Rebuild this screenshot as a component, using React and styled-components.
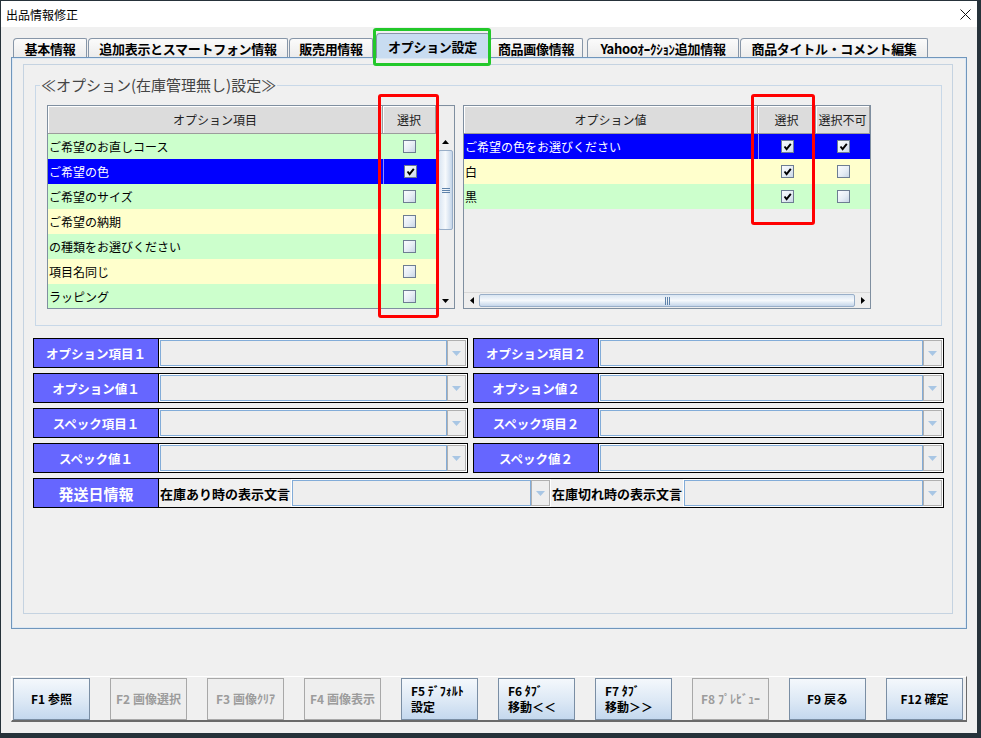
import React from 'react'
import styled, { createGlobalStyle } from 'styled-components'

const GlobalStyle = createGlobalStyle`
    html, body {
        margin: 0;
        padding: 0;
        background: #26323a;
    }
    body {
        font-family: "Noto Sans CJK JP", "Noto Sans", sans-serif;
        font-size: 12px;
        color: #000;
    }
    * {
        box-sizing: border-box;
    }
`;

const Window = styled.div`
    position: relative;
    margin: 1px 0 0 1px;
    width: 976px;
    height: 732px;
    background: #f0f0f0;
    display: flex;
    flex-direction: column;
    overflow: hidden;
`;

const TitleBar = styled.div`
    height: 26px;
    flex-shrink: 0;
    background: #fff;
    display: flex;
    align-items: center;
    justify-content: space-between;
    padding: 0 6px 0 5px;
    font-size: 12px;
`;

const Body = styled.div`
    padding: 6px 10px 0 10px;
    display: flex;
    flex-direction: column;
`;

const TabStrip = styled.div`
    height: 24px;
    display: flex;
    align-items: flex-end;
    padding-left: 2px;
`;

const Tab = styled.div`
    position: relative;
    z-index: ${({ active }) => active ? 2 : 1};
    width: ${({ w }) => w}px;
    margin-left: ${({ ml }) => ml}px;
    height: ${({ active }) => active ? 25 : 19}px;
    margin-bottom: ${({ active }) => active ? -1 : 0}px;
    border: 1px solid #8796a8;
    border-bottom: none;
    border-radius: 4px 2px 0 0;
    background: ${({ active }) => active ? '#c8dcf1' : 'linear-gradient(#fbfbfb, #ececec)'};
    display: flex;
    align-items: center;
    justify-content: center;
    font-size: 13px;
    font-weight: 700;
    white-space: nowrap;
    letter-spacing: -0.3px;
`;

const TabPanel = styled.div`
    height: 572px;
    border: 1px solid #7096bc;
    box-shadow: inset 0 0 0 1px #dce8f4;
    padding: 6px 13px 14px 11px;
    display: flex;
    flex-direction: column;
`;

const InnerBox = styled.div`
    flex: 1;
    border: 1px solid #c5d3e1;
    padding: 11px 8px 0 9px;
`;

const GroupBox = styled.fieldset`
    margin: 0 2px;
    border: 1px solid #c8d8e8;
    padding: 11px 11px 16px 11px;
    display: flex;
    gap: 8px;
`;

const GroupTitle = styled.legend`
    margin-left: -7px;
    padding: 0 1px;
    font-size: 15px;
    line-height: 18px;
    color: #444;
`;

const TableFrame = styled.div`
    width: 408px;
    height: 204px;
    border: 1px solid #7f8fa0;
    background: #eeeeee;
    display: flex;
    flex-direction: column;
    overflow: hidden;
`;

const HeaderRow = styled.div`
    height: 28px;
    flex-shrink: 0;
    display: flex;
`;

const HeaderCell = styled.div`
    ${({ w }) => w ? `width: ${w}px; flex-shrink: 0;` : 'flex: 1;'}
    background: #dcdcdc;
    border-right: 1px solid #9c9c9c;
    border-bottom: 1px solid #9c9c9c;
    box-shadow: inset 1px 1px 0 #fff;
    display: flex;
    align-items: center;
    justify-content: center;
    font-size: 12px;
    color: #222;
    white-space: nowrap;
`;

const Corner = styled.div`
    width: 18px;
    flex-shrink: 0;
    background: #eeeeee;
`;

const BodyArea = styled.div`
    flex: 1;
    display: flex;
    min-height: 0;
`;

const Rows = styled.div`
    flex: 1;
    display: flex;
    flex-direction: column;
    overflow: hidden;
`;

const Row = styled.div`
    height: 25px;
    flex-shrink: 0;
    display: flex;
    background: ${({ selected, odd }) => selected ? '#0000ff' : odd ? '#ffffcc' : '#ccffcc'};
    color: ${({ selected }) => selected ? '#fff' : '#000'};
`;

const Cell = styled.div`
    ${({ w }) => w ? `width: ${w}px; flex-shrink: 0;` : 'flex: 1;'}
    display: flex;
    align-items: center;
    justify-content: ${({ center }) => center ? 'center' : 'flex-start'};
    padding-left: ${({ center }) => center ? 0 : 1}px;
    font-size: 12px;
    white-space: nowrap;
    overflow: hidden;
    border-left: ${({ divider }) => divider ? '1px solid rgba(255,255,255,0.55)' : 'none'};
`;

const Box = styled.span`
    width: 13px;
    height: 13px;
    border: 1px solid #6d7d92;
    background: linear-gradient(135deg, #fafcfe 0%, #e6edf5 55%, #c9d6e6 100%);
    display: flex;
    align-items: center;
    justify-content: center;
`;

const VScroll = styled.div`
    width: 18px;
    flex-shrink: 0;
    background: #eeeeee;
    border-left: 1px solid #d8d8d8;
    display: flex;
    flex-direction: column;
`;

const HScroll = styled.div`
    height: 16px;
    flex-shrink: 0;
    background: #eeeeee;
    border-top: 1px solid #d8d8d8;
    display: flex;
`;

const ArrowBtn = styled.div`
    ${({ vertical }) => vertical ? 'height: 15px;' : 'width: 15px;'}
    flex-shrink: 0;
    display: flex;
    align-items: center;
    justify-content: center;
`;

const Thumb = styled.div`
    ${({ vertical }) => vertical
        ? 'height: 80px; margin: 1px 1px 0 1px; background: linear-gradient(to right, #d9e5f2, #f6f9fc 50%, #c5d6ea);'
        : 'flex: 1; margin: 1px 0 1px 0; background: linear-gradient(#d9e5f2, #f6f9fc 50%, #c5d6ea);'}
    border: 1px solid #98aec8;
    border-radius: 2px;
    display: flex;
    align-items: center;
    justify-content: center;
`;

const Track = styled.div`
    flex: 1;
`;

const Form = styled.div`
    margin-top: 12px;
    display: grid;
    grid-template-columns: 435px 1fr;
    grid-auto-rows: 30px;
    gap: 5px;
`;

const FieldBox = styled.div`
    grid-column: ${({ wide }) => wide ? '1 / -1' : 'auto'};
    border: 1px solid #000;
    background: #fff;
    display: flex;
`;

const Label = styled.div`
    width: 125px;
    flex-shrink: 0;
    background: #6666ff;
    border-right: 1px solid #000;
    color: #fff;
    font-weight: 700;
    font-size: ${({ big }) => big ? 15 : 12.5}px;
    display: flex;
    align-items: center;
    justify-content: center;
    white-space: nowrap;
`;

const ComboWrap = styled.div`
    flex: 1;
    padding: 1px;
    display: flex;
`;

const Caption = styled.div`
    flex-shrink: 0;
    background: #f0f0f0;
    padding: 0 1px;
    display: flex;
    align-items: center;
    font-size: 13px;
    font-weight: 700;
    white-space: nowrap;
`;

const ComboField = styled.div`
    flex: 1;
    display: flex;
    background: #f0f0f0;
`;

const ComboText = styled.div`
    flex: 1;
    background: #eeeeee;
    border: 1px solid #82acd8;
`;

const ComboArrow = styled.div`
    width: 19px;
    flex-shrink: 0;
    background: #eeeeee;
    border: 1px solid #b0b0b0;
    display: flex;
    align-items: center;
    justify-content: center;
`;

const ButtonBar = styled.div`
    margin-top: 47px;
    border-top: 1px solid #fff;
    border-left: 1px solid #fff;
    border-right: 1px solid #6a6a6a;
    border-bottom: 2px solid #6a6a6a;
    padding: 1px 1px 0 1px;
    display: flex;
    gap: 20px;
`;

const FButton = styled.div`
    width: 77px;
    height: 42px;
    flex-shrink: 0;
    border: 1px solid ${({ disabled }) => disabled ? '#a8a8a8' : '#7a8ea4'};
    background: ${({ disabled }) => disabled ? '#eeeeee' : 'linear-gradient(#f4f8fc, #dce8f5 55%, #c4d8ee)'};
    color: ${({ disabled }) => disabled ? '#9c9c9c' : '#000'};
    font-size: 12px;
    font-weight: 700;
    line-height: 16px;
    display: flex;
    flex-direction: column;
    justify-content: center;
    align-items: ${({ multi }) => multi ? 'flex-start' : 'center'};
    padding-left: ${({ multi }) => multi ? 9 : 0}px;
    white-space: nowrap;
`;

const Mark = styled.div`
    position: absolute;
    left: ${({ x }) => x}px;
    top: ${({ y }) => y}px;
    width: ${({ w }) => w}px;
    height: ${({ h }) => h}px;
    border: 3px solid ${({ color }) => color};
    border-radius: 3px;
    pointer-events: none;
    z-index: 10;
`;

const tabs = [
    { label: '基本情報', w: 74, ml: 0 },
    { label: '追加表示とスマートフォン情報', w: 200, ml: 1 },
    { label: '販売用情報', w: 84, ml: 1 },
    { label: 'オプション設定', w: 113, ml: 3, active: true },
    { label: '商品画像情報', w: 94, ml: 0 },
    { label: 'Yahooｵｰｸｼｮﾝ追加情報', w: 152, ml: 4 },
    { label: '商品タイトル・コメント編集', w: 188, ml: 1 },
];

const optionItems = [
    { name: 'ご希望のお直しコース', checked: false },
    { name: 'ご希望の色', checked: true, selected: true },
    { name: 'ご希望のサイズ', checked: false },
    { name: 'ご希望の納期', checked: false },
    { name: 'の種類をお選びください', checked: false },
    { name: '項目名同じ', checked: false },
    { name: 'ラッピング', checked: false },
];

const optionValues = [
    { name: 'ご希望の色をお選びください', checked: true, blocked: true, selected: true },
    { name: '白', checked: true, blocked: false },
    { name: '黒', checked: true, blocked: false },
];

const buttons = [
    { lines: ['F1 参照'] },
    { lines: ['F2 画像選択'], disabled: true },
    { lines: ['F3 画像ｸﾘｱ'], disabled: true },
    { lines: ['F4 画像表示'], disabled: true },
    { lines: ['F5 ﾃﾞﾌｫﾙﾄ', '設定'] },
    { lines: ['F6 ﾀﾌﾞ', '移動＜＜'] },
    { lines: ['F7 ﾀﾌﾞ', '移動＞＞'] },
    { lines: ['F8 ﾌﾟﾚﾋﾞｭｰ'], disabled: true },
    { lines: ['F9 戻る'] },
    { lines: ['F12 確定'] },
];

function CloseIcon() {
    return (
        <svg width="11" height="11" viewBox="0 0 11 11">
            <path d="M0.5 0.5 L10.5 10.5 M10.5 0.5 L0.5 10.5" stroke="#111" strokeWidth="1" />
        </svg>
    )
}

function CheckBox({ checked }) {
    return (
        <Box>
            {checked && (
                <svg width="9" height="9" viewBox="0 0 9 9">
                    <path d="M1.5 4.5 L3.6 7.2 L7.8 1.8" stroke="#000" strokeWidth="1.9" fill="none" />
                </svg>
            )}
        </Box>
    )
}

function Arrow({ dir, color = '#000', size = 7 }) {
    const h = size / 2 + 0.5;
    const paths = {
        up: `M0 ${h} L${size / 2} 0 L${size} ${h} Z`,
        down: `M0 0 L${size / 2} ${h} L${size} 0 Z`,
        left: `M${h} 0 L0 ${size / 2} L${h} ${size} Z`,
        right: `M0 0 L${h} ${size / 2} L0 ${size} Z`,
    };
    const vertical = dir === 'up' || dir === 'down';
    return (
        <svg width={vertical ? size : h} height={vertical ? h : size}>
            <path d={paths[dir]} fill={color} />
        </svg>
    )
}

function Grip({ vertical }) {
    return vertical ? (
        <svg width="8" height="7">
            <path d="M0 1.5 H8 M0 3.5 H8 M0 5.5 H8" stroke="#5e82aa" strokeWidth="1" />
        </svg>
    ) : (
        <svg width="7" height="8">
            <path d="M1.5 0 V8 M3.5 0 V8 M5.5 0 V8" stroke="#5e82aa" strokeWidth="1" />
        </svg>
    )
}

function Combo() {
    return (
        <ComboField>
            <ComboText />
            <ComboArrow>
                <Arrow dir="down" color="#a8c6e4" size={9} />
            </ComboArrow>
        </ComboField>
    )
}

function Field({ label }) {
    return (
        <FieldBox>
            <Label>{label}</Label>
            <ComboWrap>
                <Combo />
            </ComboWrap>
        </FieldBox>
    )
}

function ItemTable() {
    return (
        <TableFrame>
            <HeaderRow>
                <HeaderCell>オプション項目</HeaderCell>
                <HeaderCell w={53}>選択</HeaderCell>
                <Corner />
            </HeaderRow>
            <BodyArea>
                <Rows>
                    {optionItems.map((item, i) => (
                        <Row key={item.name} odd={i % 2 === 1} selected={item.selected}>
                            <Cell>{item.name}</Cell>
                            <Cell w={53} center divider={item.selected}>
                                <CheckBox checked={item.checked} />
                            </Cell>
                        </Row>
                    ))}
                </Rows>
                <VScroll>
                    <ArrowBtn vertical><Arrow dir="up" /></ArrowBtn>
                    <Thumb vertical><Grip vertical /></Thumb>
                    <Track />
                    <ArrowBtn vertical><Arrow dir="down" /></ArrowBtn>
                </VScroll>
            </BodyArea>
        </TableFrame>
    )
}

function ValueTable() {
    return (
        <TableFrame>
            <HeaderRow>
                <HeaderCell>オプション値</HeaderCell>
                <HeaderCell w={58}>選択</HeaderCell>
                <HeaderCell w={54}>選択不可</HeaderCell>
            </HeaderRow>
            <Rows>
                {optionValues.map((item, i) => (
                    <Row key={item.name} odd={i % 2 === 1} selected={item.selected}>
                        <Cell>{item.name}</Cell>
                        <Cell w={58} center divider={item.selected}>
                            <CheckBox checked={item.checked} />
                        </Cell>
                        <Cell w={54} center>
                            <CheckBox checked={item.blocked} />
                        </Cell>
                    </Row>
                ))}
            </Rows>
            <HScroll>
                <ArrowBtn><Arrow dir="left" /></ArrowBtn>
                <Thumb><Grip /></Thumb>
                <ArrowBtn><Arrow dir="right" /></ArrowBtn>
            </HScroll>
        </TableFrame>
    )
}

export default function App() {
    return (
        <>
            <GlobalStyle />
            <Window>
                <TitleBar>
                    <span>出品情報修正</span>
                    <CloseIcon />
                </TitleBar>
                <Body>
                    <TabStrip>
                        {tabs.map(t => (
                            <Tab key={t.label} w={t.w} ml={t.ml} active={t.active}>{t.label}</Tab>
                        ))}
                    </TabStrip>
                    <TabPanel>
                        <InnerBox>
                            <GroupBox>
                                <GroupTitle>≪オプション(在庫管理無し)設定≫</GroupTitle>
                                <ItemTable />
                                <ValueTable />
                            </GroupBox>
                            <Form>
                                <Field label="オプション項目１" />
                                <Field label="オプション項目２" />
                                <Field label="オプション値１" />
                                <Field label="オプション値２" />
                                <Field label="スペック項目１" />
                                <Field label="スペック項目２" />
                                <Field label="スペック値１" />
                                <Field label="スペック値２" />
                                <FieldBox wide>
                                    <Label big>発送日情報</Label>
                                    <Caption>在庫あり時の表示文言</Caption>
                                    <ComboWrap><Combo /></ComboWrap>
                                    <Caption>在庫切れ時の表示文言</Caption>
                                    <ComboWrap><Combo /></ComboWrap>
                                </FieldBox>
                            </Form>
                        </InnerBox>
                    </TabPanel>
                    <ButtonBar>
                        {buttons.map(b => (
                            <FButton key={b.lines[0]} disabled={b.disabled} multi={b.lines.length > 1}>
                                {b.lines.map(l => <span key={l}>{l}</span>)}
                            </FButton>
                        ))}
                    </ButtonBar>
                </Body>
                <Mark x={372} y={27} w={118} h={38} color="#22c82a" />
                <Mark x={377} y={93} w={61} h={224} color="#ff0000" />
                <Mark x={750} y={93} w={64} h={131} color="#ff0000" />
            </Window>
        </>
    )
}
